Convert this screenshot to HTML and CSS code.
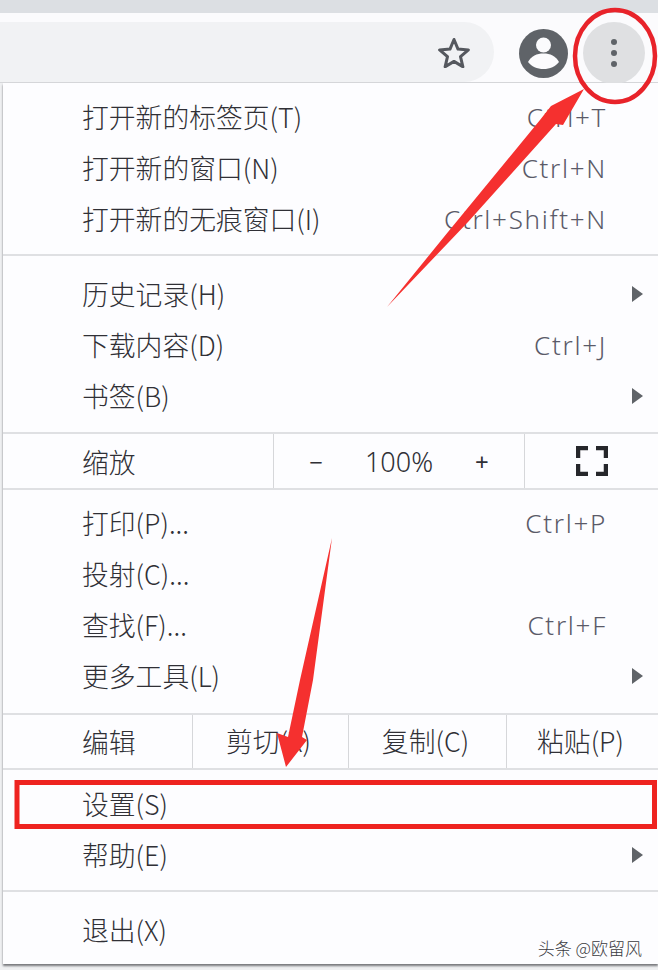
FILE: index.html
```html
<!DOCTYPE html>
<html lang="zh-CN">
<head>
    <meta charset="UTF-8">
    <meta name="viewport" content="width=device-width, initial-scale=1.0">
    <title>Chrome menu</title>
    <link rel="stylesheet" href="styles.css">
</head>
<body>
    <div class="page">
        <div class="tabstrip"></div>
        <div class="toolbar">
            <div class="omnibox">
                <svg class="star" width="34" height="32" viewBox="0 0 34 32">
                    <path d="M17 3.5l4 9.6 10.4.8-7.9 6.8 2.400 10.100L17 25.400l-8.900 5.400 2.400-10.100-7.900-6.800 10.400-.8z" fill="none" stroke="#55585e" stroke-width="3" stroke-linejoin="round"/>
                </svg>
            </div>
            <svg class="avatar" width="49" height="49" viewBox="0 0 49 49">
                <circle cx="24.500" cy="24.500" r="24.500" fill="#5f6368"/>
                <circle cx="24.500" cy="16" r="7.500" fill="#fbfbfd"/>
                <path d="M9 33c3-6 9-8.500 15.500-8.500S37 27 40 33c-3.500 4.500-9 7-15.500 7S12.500 37.500 9 33z" fill="#fbfbfd"/>
            </svg>
            <div class="kebab">
                <span class="dot"></span>
                <span class="dot"></span>
                <span class="dot"></span>
            </div>
        </div>

        <div class="menu">
            <div class="group group-tabs">
                <div class="row"><span>打开新的标签页(T)</span><span class="keys">Ctrl+T</span></div>
                <div class="row"><span>打开新的窗口(N)</span><span class="keys">Ctrl+N</span></div>
                <div class="row"><span>打开新的无痕窗口(I)</span><span class="keys">Ctrl+Shift+N</span></div>
            </div>
            <div class="group group-history">
                <div class="row"><span>历史记录(H)</span><span class="more"></span></div>
                <div class="row"><span>下载内容(D)</span><span class="keys">Ctrl+J</span></div>
                <div class="row"><span>书签(B)</span><span class="more"></span></div>
            </div>
            <div class="zoom-row">
                <span class="cell-label">缩放</span>
                <div class="zoom-controls">
                    <span class="zoom-sign">−</span>
                    <span class="zoom-value">100%</span>
                    <span class="zoom-sign">+</span>
                </div>
                <div class="zoom-full">
                    <svg width="32" height="30" viewBox="0 0 32 30">
                        <path d="M2 12V2h10M20 2h10v10M30 18v10H20M12 28H2V18" fill="none" stroke="#26272b" stroke-width="4.500"/>
                    </svg>
                </div>
            </div>
            <div class="group group-tools">
                <div class="row"><span>打印(P)...</span><span class="keys">Ctrl+P</span></div>
                <div class="row"><span>投射(C)...</span></div>
                <div class="row"><span>查找(F)...</span><span class="keys">Ctrl+F</span></div>
                <div class="row"><span>更多工具(L)</span><span class="more"></span></div>
            </div>
            <div class="edit-row">
                <span class="cell-label">编辑</span>
                <span class="edit-cell">剪切(X)</span>
                <span class="edit-cell">复制(C)</span>
                <span class="edit-cell">粘贴(P)</span>
            </div>
            <div class="group group-settings">
                <div class="row"><span>设置(S)</span></div>
                <div class="row"><span>帮助(E)</span><span class="more"></span></div>
            </div>
            <div class="group-exit">
                <div class="row"><span>退出(X)</span></div>
            </div>
            <div class="watermark">头条 @欧留风</div>
        </div>

        <!-- red marks drawn over the screenshot -->
        <svg class="marks" width="658" height="970" viewBox="0 0 658 970">
            <ellipse cx="615" cy="56" rx="40" ry="46" fill="none" stroke="#e8232a" stroke-width="4.500"/>
            <path d="M387 307L448 232 540 120 551 106 584 89 563 125 556 124 468 222z" fill="#f5302f"/>
            <path d="M332 538L313 680 302 737 307 740 286 767 277 733 288 737 300 680z" fill="#f5302f"/>
            <rect x="17" y="782.500" width="637.500" height="44" fill="none" stroke="#ee2320" stroke-width="5"/>
        </svg>
    </div>
</body>
</html>
```

FILE: styles.css
```css
* {
    box-sizing: border-box;
}

body {
    margin: 0;
    background-color: #eff0f2;
    font-family: "Noto Sans CJK SC", "Noto Sans", sans-serif;
}

.page {
    position: relative;
    width: 658px;
    height: 970px;
    overflow: hidden;
}

.tabstrip {
    height: 13px;
    background-color: #dcdfe3;
}

.toolbar {
    display: flex;
    align-items: flex-start;
    height: 70px;
    padding-top: 9px;
    background-color: #fbfbfd;
    border-bottom: 1px solid #d6d7da;
}

.omnibox {
    display: flex;
    align-items: center;
    justify-content: flex-end;
    width: 494px;
    height: 60px;
    padding-right: 23px;
    background-color: #f1f2f4;
    border-radius: 0 30px 30px 0;
}

.avatar {
    margin: 7px 0 0 25px;
}

.kebab {
    display: flex;
    flex-direction: column;
    align-items: center;
    justify-content: center;
    gap: 5px;
    width: 62px;
    height: 62px;
    margin-left: 15px;
    background-color: #dfe0e2;
    border-radius: 50%;
}

.dot {
    width: 6px;
    height: 6px;
    background-color: #5f6368;
    border-radius: 50%;
}

.menu {
    position: relative;
    height: 881px;
    margin-left: 3px;
    background-color: #fdfdff;
    box-shadow: 0 2px 2px #77787c;
    color: #303036;
    font-size: 26.8px;
    font-weight: 300;
    line-height: 51px;
}

.group {
    border-bottom: 2px solid #dfe0e3;
}

.group-tabs {
    padding: 8px 0 10px;
}

.group-history {
    padding: 12px 0 11px;
}

.group-tools {
    padding: 7px 0 12px;
}

.group-settings {
    padding: 8px 0 10px;
}

.group-exit {
    padding-top: 12px;
}

.row {
    display: flex;
    align-items: center;
    justify-content: space-between;
    height: 51px;
    padding: 0 15px 0 79px;
}

.keys {
    margin-top: 2px;
    margin-right: 36px;
    color: #5a5a68;
    font-family: "Noto Sans", sans-serif;
    font-weight: 300;
    font-size: 26px;
    letter-spacing: 1.7px;
}

.more {
    width: 0;
    height: 0;
    border-left: 11px solid #5f6368;
    border-top: 8px solid transparent;
    border-bottom: 8px solid transparent;
}

.zoom-row {
    display: grid;
    grid-template-columns: 270px 252px 1fr;
    align-items: center;
    height: 56px;
    border-bottom: 2px solid #dfe0e3;
}

.cell-label {
    padding-left: 79px;
}

.zoom-controls {
    display: flex;
    align-items: center;
    justify-content: center;
    gap: 42px;
    height: 100%;
    border-left: 1px solid #d6d7da;
    border-right: 1px solid #d6d7da;
    font-family: "Noto Sans", sans-serif;
    font-size: 27px;
}

.zoom-sign {
    font-size: 24px;
    font-weight: 400;
}

.zoom-full {
    display: flex;
    align-items: center;
    justify-content: flex-start;
    padding-left: 51px;
}

.edit-row {
    display: grid;
    grid-template-columns: 189px 156px 158px 1fr;
    align-items: center;
    height: 55px;
    border-bottom: 2px solid #dfe0e3;
}

.edit-cell {
    height: 100%;
    padding-right: 4px;
    border-left: 1px solid #d6d7da;
    text-align: center;
}

.watermark {
    position: absolute;
    right: 16px;
    bottom: 3px;
    color: #3a3a3e;
    font-size: 17px;
    line-height: 26px;
}

.marks {
    position: absolute;
    top: 0;
    left: 0;
}
```
